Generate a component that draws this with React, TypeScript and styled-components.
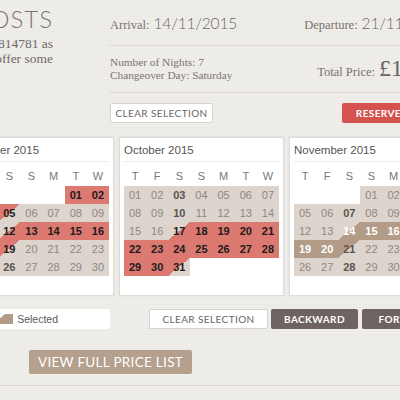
import styled, { createGlobalStyle } from "styled-components";

const GlobalStyle = createGlobalStyle`
  html, body {
    margin: 0;
    padding: 0;
  }
  body {
    background-color: #efede9;
    background-image: repeating-linear-gradient(
      0deg,
      rgba(0, 0, 0, 0.012) 0 1px,
      transparent 1px 3px
    );
    overflow: hidden;
    font-family: "Liberation Serif", serif;
  }
`;

type Kind = "free" | "booked" | "sel";
type Half = "in" | "out" | "full";
type Stay = { from: number; to: number; kind: Kind };

const colors: Record<Kind, string> = {
  free: "#ddd4cd",
  booked: "#dc7a71",
  sel: "#b39c87",
};

const months: { title: string; offset: number; days: number; stays: Stay[] }[] = [
  {
    title: "September 2015",
    offset: 5,
    days: 30,
    stays: [
      { from: 0, to: 5, kind: "booked" },
      { from: 12, to: 19, kind: "booked" },
    ],
  },
  {
    title: "October 2015",
    offset: 0,
    days: 31,
    stays: [{ from: 17, to: 31, kind: "booked" }],
  },
  {
    title: "November 2015",
    offset: 3,
    days: 30,
    stays: [{ from: 14, to: 21, kind: "sel" }],
  },
];

const weekdays = ["T", "F", "S", "S", "M", "T", "W"];

const Page = styled.div`
  width: 620px;
  margin-left: -51px;
`;

const Top = styled.div`
  display: flex;
`;

const LeftCol = styled.div`
  width: 161px;
  box-sizing: border-box;
  padding: 5px 57px 0 0;
  text-align: right;
`;

const Heading = styled.h1`
  margin: 0;
  font-family: Lato, "Liberation Sans", sans-serif;
  font-weight: 300;
  font-size: 24px;
  line-height: 28px;
  letter-spacing: 1px;
  color: #7a7572;
  white-space: nowrap;
`;

const Intro = styled.p`
  margin: 3px 0 0;
  font-size: 13.5px;
  line-height: 15px;
  color: #6f6966;
  white-space: nowrap;
`;

const InfoPanel = styled.div`
  width: 335px;
`;

const InfoRow = styled.div`
  display: flex;
  justify-content: space-between;
  align-items: baseline;
  padding: 11px 0 8px;
  line-height: 24px;
  border-bottom: 1px solid #dcd8d3;
`;

const DetailRow = styled.div`
  display: flex;
  justify-content: space-between;
  align-items: flex-end;
  padding: 10px 0 10px;
  border-bottom: 1px solid #dcd8d3;
`;

const Label = styled.span`
  font-size: 12.5px;
  color: #77716d;
`;

const DateValue = styled.span`
  margin-left: 4px;
  font-family: Lato, "Liberation Sans", sans-serif;
  font-weight: 300;
  font-size: 15.5px;
  letter-spacing: -0.2px;
  color: #6a6461;
`;

const Details = styled.div`
  font-size: 11.3px;
  line-height: 13px;
  color: #7b7571;
`;

const Total = styled.div`
  line-height: 20px;
`;

const Price = styled.span`
  margin-left: 4px;
  font-size: 24px;
  color: #6a6461;
`;

const ButtonRow = styled.div`
  display: flex;
  justify-content: space-between;
  margin-top: 10px;
`;

const Button = styled.button<{ $variant: "light" | "red" | "dark"; $width: number }>`
  width: ${(p) => p.$width}px;
  height: 20px;
  padding: 0;
  border-radius: 2px;
  font-family: Lato, "Liberation Sans", sans-serif;
  font-size: 10px;
  letter-spacing: 0.4px;
  text-transform: uppercase;
  cursor: pointer;
  border: ${(p) => (p.$variant === "light" ? "1px solid #d6d2cd" : "none")};
  background: ${(p) =>
    p.$variant === "light" ? "#fff" : p.$variant === "red" ? "#d6524f" : "#6d6360"};
  color: ${(p) => (p.$variant === "light" ? "#6b6461" : "#fff")};
  font-weight: ${(p) => (p.$variant === "light" ? 400 : 700)};
`;

const Calendars = styled.div`
  display: flex;
  gap: 5px;
  margin-top: 14px;
`;

const Card = styled.div`
  flex: 0 0 165px;
  box-sizing: border-box;
  background: #fff;
  border: 1px solid #dedad5;
  box-shadow: 0 0 2px rgba(0, 0, 0, 0.08);
  padding: 0 4px 19px;
`;

const MonthTitle = styled.div`
  padding: 4px 0 3px;
  line-height: 16px;
  border-bottom: 1px solid #eeebe8;
  font-family: "Liberation Sans", Arial, sans-serif;
  font-size: 11.5px;
  color: #555;
`;

const WeekRow = styled.div`
  display: grid;
  grid-template-columns: repeat(7, 1fr);
  padding-top: 4px;
  height: 20px;
  line-height: 20px;
  text-align: center;
  font-family: "Liberation Sans", Arial, sans-serif;
  font-size: 11px;
  color: #777;
`;

const DayGrid = styled.div`
  display: grid;
  grid-template-columns: repeat(7, 1fr);
  grid-auto-rows: 18px;
`;

const Cell = styled.div<{ $bg: string; $color: string; $bold: boolean }>`
  background: ${(p) => p.$bg};
  color: ${(p) => p.$color};
  font-weight: ${(p) => (p.$bold ? 700 : 400)};
  font-family: "Liberation Sans", Arial, sans-serif;
  font-size: 11px;
  line-height: 18px;
  text-align: center;
`;

const Controls = styled.div`
  display: flex;
  margin-top: 13px;
  height: 20px;
`;

const Legend = styled.div`
  width: 161px;
  box-sizing: border-box;
  display: flex;
  justify-content: flex-end;
  align-items: center;
  gap: 10px;
  padding-right: 52px;
  background: #fff;
  border-radius: 2px;
  overflow: hidden;
`;

const LegendItem = styled.div`
  display: flex;
  align-items: center;
  gap: 4px;
  white-space: nowrap;
  font-family: "Liberation Sans", Arial, sans-serif;
  font-size: 10.5px;
  color: #5e5855;
`;

const Spaced = styled.div<{ $gap: number }>`
  margin-left: ${(p) => p.$gap}px;
  display: flex;
`;

const PriceListButton = styled.button`
  display: block;
  margin: 21px 0 0 80px;
  width: 163px;
  height: 24px;
  padding: 0;
  border: none;
  border-radius: 2px;
  background: #b4a08c;
  color: #fff;
  font-family: Lato, "Liberation Sans", sans-serif;
  font-size: 13.5px;
  letter-spacing: 0.3px;
  cursor: pointer;
`;

const Footer = styled.div`
  margin-top: 11px;
  border-top: 1px solid #dedbd6;
`;

function dayState(d: number, stays: Stay[]): { kind: Kind; half: Half } {
  for (const s of stays) {
    if (d === s.from) return { kind: s.kind, half: "in" };
    if (d === s.to) return { kind: s.kind, half: "out" };
    if (d > s.from && d < s.to) return { kind: s.kind, half: "full" };
  }
  return { kind: "free", half: "full" };
}

function cellLook(kind: Kind, half: Half, saturday: boolean) {
  const c = colors[kind];
  let bg = c;
  if (half === "in") bg = `linear-gradient(to bottom right, ${colors.free} 50%, ${c} 50%)`;
  if (half === "out") bg = `linear-gradient(to bottom right, ${c} 50%, ${colors.free} 50%)`;
  if (kind === "free") {
    return { bg, color: saturday ? "#5b5451" : "#8e8783", bold: saturday };
  }
  if (kind === "booked") return { bg, color: "#231b1b", bold: true };
  return { bg, color: half === "out" ? "#5b5451" : "#fff", bold: true };
}

const Swatch = ({ color, cut }: { color: string; cut?: boolean }) => (
  <svg width="15" height="10" viewBox="0 0 15 10">
    <polygon points={cut ? "0,10 0,6 7,0 15,0 15,10" : "0,0 15,0 15,10 0,10"} fill={color} />
  </svg>
);

const Month = ({ title, offset, days, stays }: (typeof months)[number]) => (
  <Card>
    <MonthTitle>{title}</MonthTitle>
    <WeekRow>
      {weekdays.map((w, i) => (
        <span key={i}>{w}</span>
      ))}
    </WeekRow>
    <DayGrid>
      {Array.from({ length: offset }, (_, i) => (
        <Cell key={`e${i}`} $bg="transparent" $color="#000" $bold={false} />
      ))}
      {Array.from({ length: days }, (_, i) => {
        const d = i + 1;
        const { kind, half } = dayState(d, stays);
        const look = cellLook(kind, half, (offset + i) % 7 === 2);
        return (
          <Cell key={d} $bg={look.bg} $color={look.color} $bold={look.bold}>
            {String(d).padStart(2, "0")}
          </Cell>
        );
      })}
    </DayGrid>
  </Card>
);

export default function App() {
  return (
    <>
      <GlobalStyle />
      <Page>
        <Top>
          <LeftCol>
            <Heading>COSTS</Heading>
            <Intro>
              01234 814781 as
              <br />
              we can offer some
            </Intro>
          </LeftCol>
          <InfoPanel>
            <InfoRow>
              <div>
                <Label>Arrival:</Label>
                <DateValue>14/11/2015</DateValue>
              </div>
              <div>
                <Label>Departure:</Label>
                <DateValue>21/11/2015</DateValue>
              </div>
            </InfoRow>
            <DetailRow>
              <Details>
                Number of Nights: 7
                <br />
                Changeover Day: Saturday
              </Details>
              <Total>
                <Label>Total Price:</Label>
                <Price>£1,050</Price>
              </Total>
            </DetailRow>
            <ButtonRow>
              <Button $variant="light" $width={103}>
                Clear Selection
              </Button>
              <Button $variant="red" $width={103}>
                Reserve Now
              </Button>
            </ButtonRow>
          </InfoPanel>
        </Top>

        <Calendars>
          {months.map((m) => (
            <Month key={m.title} {...m} />
          ))}
        </Calendars>

        <Controls>
          <Legend>
            <LegendItem>
              <Swatch color={colors.free} />
              Available
            </LegendItem>
            <LegendItem>
              <Swatch color={colors.booked} />
              Booked
            </LegendItem>
            <LegendItem>
              <Swatch color={colors.sel} cut />
              Selected
            </LegendItem>
          </Legend>
          <Spaced $gap={39}>
            <Button $variant="light" $width={119}>
              Clear Selection
            </Button>
          </Spaced>
          <Spaced $gap={3}>
            <Button $variant="dark" $width={87}>
              Backward
            </Button>
          </Spaced>
          <Spaced $gap={4}>
            <Button $variant="dark" $width={87}>
              Forward
            </Button>
          </Spaced>
        </Controls>

        <PriceListButton>VIEW FULL PRICE LIST</PriceListButton>
        <Footer />
      </Page>
    </>
  );
}
